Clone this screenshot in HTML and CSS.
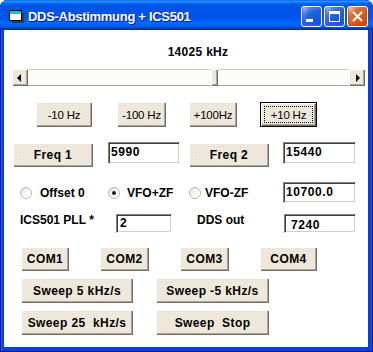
FILE: index.html
```html
<!DOCTYPE html>
<html lang="de">
<head>
  <meta charset="UTF-8">
  <title>DDS-Abstimmung + ICS501</title>
  <link rel="stylesheet" href="styles.css">
</head>
<body>
  <div class="window">
    <div class="titlebar">
      <svg class="app-icon" width="16" height="14" viewBox="0 0 16 14">
        <rect x="3" y="3" width="12" height="10" fill="#3a3a3a"/>
        <rect x="0.5" y="0.5" width="12" height="10" fill="#fff" stroke="#000"/>
        <rect x="1" y="1" width="11" height="3" fill="#10c8d0"/>
      </svg>
      <span class="title">DDS-Abstimmung + ICS501</span>
      <div class="title-buttons">
        <span class="tbtn">
          <svg width="19" height="19" viewBox="0 0 19 19"><rect x="4" y="12" width="7" height="3" fill="#fff"/></svg>
        </span>
        <span class="tbtn">
          <svg width="19" height="19" viewBox="0 0 19 19"><path d="M4.5 6.5h10v8h-10z" fill="none" stroke="#fff"/><rect x="4" y="4" width="11" height="3" fill="#fff"/></svg>
        </span>
        <span class="tbtn tbtn-close">
          <svg width="19" height="19" viewBox="0 0 19 19"><path d="M5 5l9 9M14 5l-9 9" stroke="#fff" stroke-width="2"/></svg>
        </span>
      </div>
    </div>

    <div class="client">
      <div class="freq-display">14025 kHz</div>

      <div class="hscroll">
        <span class="sb-arrow sb-left"></span>
        <div class="sb-track"><span class="sb-thumb" style="margin-left: 183px"></span></div>
        <span class="sb-arrow sb-right"></span>
      </div>

      <div class="row row-step">
        <button class="btn btn-step">-10 Hz</button>
        <button class="btn btn-step">-100 Hz</button>
        <button class="btn btn-step">+100Hz</button>
        <button class="btn btn-step btn-default">+10 Hz</button>
      </div>

      <div class="row row-freq">
        <button class="btn btn-freq">Freq 1</button>
        <div class="field field-freq">5990</div>
        <button class="btn btn-freq">Freq 2</button>
        <div class="field field-freq">15440</div>
      </div>

      <div class="row row-mode">
        <label class="radio radio-offset"><span class="radio-dot"></span>Offset 0</label>
        <label class="radio radio-plus"><span class="radio-dot checked"></span>VFO+ZF</label>
        <label class="radio radio-minus"><span class="radio-dot"></span>VFO-ZF</label>
        <div class="field field-zf">10700.0</div>
      </div>

      <div class="row row-pll">
        <span class="label label-pll">ICS501 PLL *</span>
        <div class="field field-pll">2</div>
        <span class="label label-dds">DDS out</span>
        <div class="field field-dds">7240</div>
      </div>

      <div class="row row-com">
        <button class="btn btn-com">COM1</button>
        <button class="btn btn-com">COM2</button>
        <button class="btn btn-com">COM3</button>
        <button class="btn btn-com">COM4</button>
      </div>

      <div class="row row-sweep">
        <button class="btn btn-sweep">Sweep 5 kHz/s</button>
        <button class="btn btn-sweep">Sweep -5 kHz/s</button>
      </div>
      <div class="row row-sweep">
        <button class="btn btn-sweep">Sweep 25  kHz/s</button>
        <button class="btn btn-sweep">Sweep  Stop</button>
      </div>
    </div>
  </div>
</body>
</html>
```

FILE: styles.css
```css
* {
  box-sizing: border-box;
}
body {
  margin: 0;
  background: #fff;
  font-family: "Liberation Sans", Arial, sans-serif;
}
.window {
  width: 373px;
  height: 352px;
  display: flex;
  flex-direction: column;
  background: #0b3fd6;
  border-radius: 8px 8px 0 0;
  overflow: hidden;
  box-shadow: inset 1px 0 #0019a0, inset -1px 0 #0019a0, inset 0 -1px #0019a0, inset 2px 0 #2a63f0, inset -2px 0 #1a4fe0;
}

/* Title bar */
.titlebar {
  height: 30px;
  flex: none;
  display: flex;
  align-items: center;
  padding: 3px 5px 0 9px;
  background: linear-gradient(to bottom, #0058ee 0%, #3593ff 4%, #288eff 6%, #127dff 8%, #036ffc 10%, #0262ee 14%, #0057e5 20%, #0054e3 24%, #0055eb 56%, #005bf5 66%, #026afe 76%, #0062ef 86%, #0052d6 92%, #0040ab 94%, #003092 100%);
}
.app-icon {
  flex: none;
}
.title {
  margin-left: 3px;
  color: #fff;
  font-weight: bold;
  font-size: 13px;
  letter-spacing: -0.3px;
  text-shadow: 1px 1px #0f1089;
}
.title-buttons {
  margin-left: auto;
  display: flex;
  gap: 2px;
}
.tbtn {
  width: 21px;
  height: 21px;
  display: flex;
  border: 1px solid #fff;
  border-radius: 3px;
  background: radial-gradient(circle at 90% 90%, #0054e9 0%, #2263d5 55%, #4479e4 70%, #a3bbec 90%, #fff 100%);
  box-shadow: inset 0 -1px 2px 1px #4646ff;
}
.tbtn-close {
  background: radial-gradient(circle at 90% 90%, #cc4600 0%, #dc6527 55%, #cd7546 70%, #ffccb2 90%, #fff 100%);
  box-shadow: inset 0 -1px 2px 1px #da4600;
}

/* Form area */
.client {
  flex: 1;
  margin: 0 5px 5px 4px;
  background: #fff;
  display: flex;
  flex-direction: column;
}
.freq-display {
  margin-top: 15px;
  padding-left: 24px;
  height: 14px;
  line-height: 14px;
  text-align: center;
  font-weight: bold;
  font-size: 12px;
  letter-spacing: 0.3px;
}

/* Scrollbar */
.hscroll {
  margin: 10px 0 0 8px;
  width: 353px;
  height: 17px;
  display: flex;
}
.sb-arrow,
.sb-thumb,
.btn {
  background-color: #eeebdd;
  background-image: radial-gradient(circle at 1px 1px, #ecd2cc 0.5px, transparent 0.8px);
  background-size: 3px 3px;
  box-shadow: inset 1px 1px #fff, inset -1px -1px #716f64, inset -2px -2px #aca899;
}
.sb-arrow {
  width: 16px;
  height: 17px;
  display: flex;
  align-items: center;
  justify-content: center;
}
.sb-arrow::before {
  content: "";
  border-top: 4px solid transparent;
  border-bottom: 4px solid transparent;
}
.sb-left::before {
  border-right: 4px solid #000;
  margin-right: 2px;
}
.sb-right::before {
  border-left: 4px solid #000;
  margin-left: 1px;
}
.sb-track {
  flex: 1;
  display: flex;
  background: #fcfcfa;
  border-top: 1px solid #cfcdc2;
  border-bottom: 1px solid #a6a496;
}
.sb-thumb {
  width: 7px;
  margin-top: -1px;
  margin-bottom: -1px;
}

/* Rows */
.row {
  display: flex;
  align-items: flex-start;
}
.btn {
  border: 0;
  padding: 0;
  color: #000;
  font-family: "Liberation Sans", Arial, sans-serif;
  font-weight: bold;
  font-size: 12px;
  letter-spacing: 0.4px;
  white-space: pre;
}
.btn-default {
  box-shadow: inset 0 0 0 1px #000, inset 2px 2px #fff, inset -2px -2px #716f64, inset -3px -3px #aca899;
  outline: 1px dotted #000;
  outline-offset: -5px;
}

.row-step {
  margin-top: 16px;
  padding-left: 32px;
}
.btn-step {
  height: 25px;
  font-weight: normal;
  font-size: 11.5px;
  letter-spacing: -0.2px;
}
.btn-step:nth-child(1) { width: 56px; }
.btn-step:nth-child(2) { width: 49px; margin-left: 25px; }
.btn-step:nth-child(3) { width: 48px; margin-left: 23px; }
.btn-step:nth-child(4) { width: 57px; margin-left: 23px; }

.field {
  background: #fff;
  font-weight: bold;
  font-size: 12px;
  letter-spacing: 0.6px;
  line-height: 14px;
  padding: 2px 2px 0;
  border: 1px solid;
  border-color: #808080 #fff #fff #808080;
  box-shadow: inset 1px 1px #404040, inset -1px -1px #d4d0c8;
}

.row-freq {
  margin-top: 15px;
  padding-left: 9px;
  height: 25px;
}
.btn-freq {
  width: 80px;
  height: 24px;
  margin-top: 1px;
}
.field-freq {
  height: 22px;
}
.row-freq .field-freq:nth-child(2) { width: 72px; margin-left: 15px; }
.row-freq .btn-freq:nth-child(3) { margin-left: 9px; }
.row-freq .field-freq:nth-child(4) { width: 73px; margin-left: 14px; }

.row-mode {
  margin-top: 15px;
  padding-left: 16px;
  align-items: center;
}
.radio {
  display: flex;
  align-items: center;
  gap: 7px;
  font-weight: bold;
  font-size: 12px;
}
.radio-offset { width: 88px; gap: 8px; }
.radio-plus { width: 81px; }
.radio-minus { width: 94px; gap: 4px; }
.radio-dot {
  width: 12px;
  height: 12px;
  border-radius: 50%;
  border: 1px solid #b9b7ab;
  background: linear-gradient(135deg, #e4e2d8, #fff 70%);
  display: flex;
  align-items: center;
  justify-content: center;
}
.radio-dot.checked::before {
  content: "";
  width: 4px;
  height: 4px;
  border-radius: 50%;
  background: #1a1a1a;
}
.field-zf {
  width: 73px;
  height: 21px;
}

.row-pll {
  margin-top: 11px;
  padding-left: 16px;
}
.label {
  font-weight: bold;
  font-size: 12px;
  line-height: 14px;
  margin-top: -1px;
}
.label-pll { width: 96px; }
.label-dds { width: 87px; margin-left: 25px; }
.field-pll {
  width: 56px;
  height: 19px;
  padding-top: 1px;
  padding-left: 3px;
}
.field-dds {
  width: 72px;
  height: 19px;
  padding-top: 3px;
  padding-left: 6px;
}

.row-com {
  margin-top: 14px;
  padding-left: 17px;
}
.btn-com {
  height: 24px;
  width: 49px;
  margin-left: 31px;
}
.btn-com:first-child { width: 48px; margin-left: 0; }
.btn-com:last-child { width: 57px; }

.row-sweep {
  margin-top: 7px;
  padding-left: 17px;
}
.btn-sweep {
  width: 112px;
  height: 25px;
}
.btn-sweep + .btn-sweep {
  width: 113px;
  margin-left: 23px;
}
```
